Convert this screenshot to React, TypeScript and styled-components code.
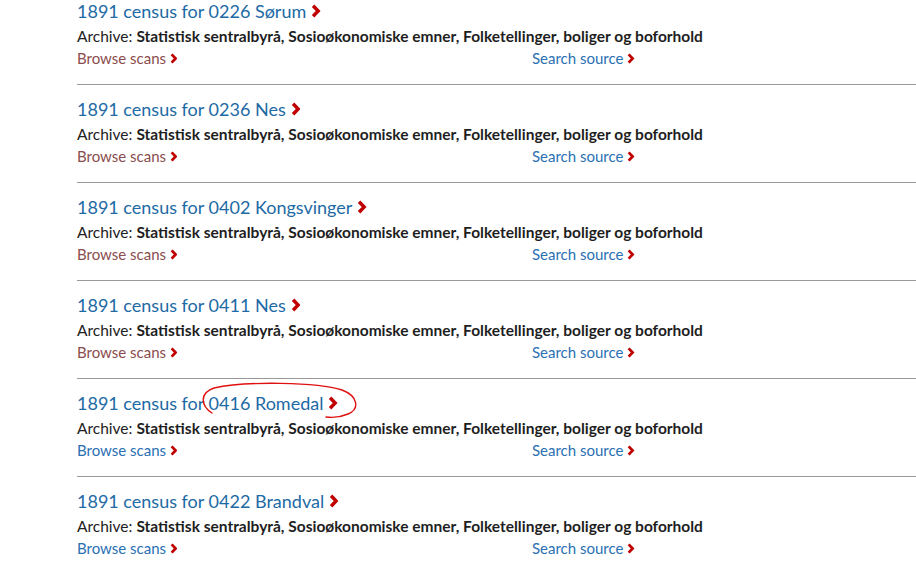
import React from "react";
import styled, { createGlobalStyle } from "styled-components";

const Global = createGlobalStyle`
  html, body { margin: 0; padding: 0; background: #fff; overflow: hidden; }
  body { font-family: Lato, "Open Sans", sans-serif; }
`;

const Page = styled.div`
  position: relative;
  width: 916px;
  height: 567px;
  overflow: hidden;
`;

const List = styled.div`
  margin-top: -13px;
  padding-left: 77px;
`;

const Item = styled.div`
  padding: 12px 0 15px;
  border-bottom: 1px solid #999;
  &:last-child { border-bottom: none; }
`;

const TitleRow = styled.div`
  height: 26px;
`;

const Title = styled.a`
  display: inline-flex;
  align-items: center;
  gap: 5px;
  font-size: 18px;
  line-height: 24px;
  color: #1d6aa5;
  text-decoration: none;
`;

const Archive = styled.div`
  font-size: 15.5px;
  line-height: 22px;
  color: #222;
  white-space: nowrap;
  b { font-weight: 700; color: #1e1e1e; }
`;

const Links = styled.div`
  display: grid;
  grid-template-columns: 455px auto;
  font-size: 15px;
  line-height: 22px;
`;

const LinkA = styled.a<{ $visited?: boolean }>`
  display: inline-flex;
  align-items: center;
  gap: 4px;
  color: ${(p) => (p.$visited ? "#8a4d4d" : "#2a70b3")};
  text-decoration: none;
`;

const Chev = ({ size }: { size: number }) => (
  <svg width={size * 0.66} height={size} viewBox="0 0 8 12" aria-hidden>
    <polyline
      points="1.8,1.4 6.2,6 1.8,10.6"
      fill="none"
      stroke="#c00000"
      strokeWidth="3"
      strokeLinejoin="miter"
    />
  </svg>
);

const Annotation = styled.svg`
  position: absolute;
  left: 0;
  top: 0;
  pointer-events: none;
`;

const items = [
  { name: "0226 Sørum", visited: true },
  { name: "0236 Nes", visited: true },
  { name: "0402 Kongsvinger", visited: true },
  { name: "0411 Nes", visited: true },
  { name: "0416 Romedal", visited: false },
  { name: "0422 Brandval", visited: false },
];

export default function App() {
  return (
    <Page>
      <Global />
      <List>
        {items.map((it) => (
          <Item key={it.name}>
            <TitleRow>
              <Title href="#">
                <span>1891 census for {it.name}</span>
                <Chev size={14} />
              </Title>
            </TitleRow>
            <Archive>
              Archive: <b>Statistisk sentralbyrå, Sosioøkonomiske emner, Folketellinger, boliger og boforhold</b>
            </Archive>
            <Links>
              <div>
                <LinkA href="#" $visited={it.visited}>
                  <span>Browse scans</span>
                  <Chev size={11} />
                </LinkA>
              </div>
              <div>
                <LinkA href="#">
                  <span>Search source</span>
                  <Chev size={11} />
                </LinkA>
              </div>
            </Links>
          </Item>
        ))}
      </List>
      <Annotation width="916" height="567">
        <path
          d="M 212 413 C 201 406, 199 393, 214 388 C 245 381, 318 382, 342 390 C 358 396, 360 409, 348 414 C 341 417, 333 418, 326 417"
          fill="none"
          stroke="#e01010"
          strokeWidth="1.4"
          strokeLinecap="round"
        />
      </Annotation>
    </Page>
  );
}
